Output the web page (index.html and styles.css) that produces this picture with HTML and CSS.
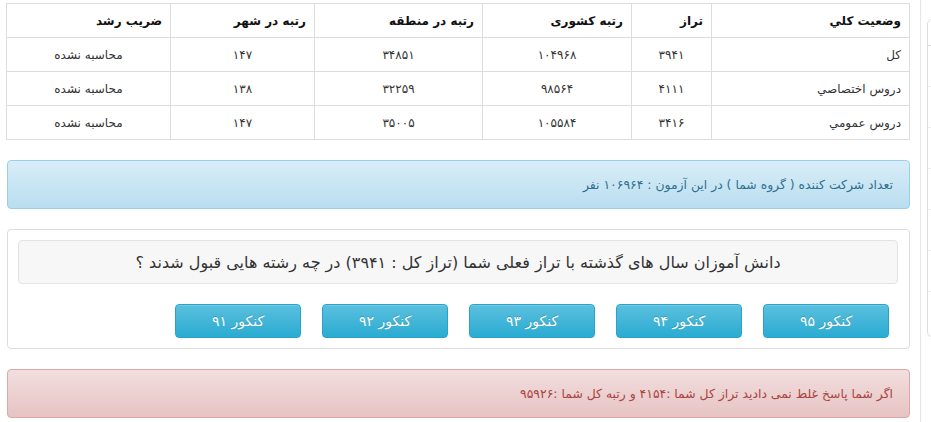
FILE: index.html
```html
<!DOCTYPE html>
<html lang="fa">
<head>
<meta charset="utf-8">
<link rel="stylesheet" href="styles.css">
</head>
<body>
<div class="page">
  <main class="main">
    <table class="results">
      <thead>
        <tr>
          <th class="c-name">وضعيت كلي</th>
          <th class="c-taraz">تراز</th>
          <th class="c-country">رتبه کشوری</th>
          <th class="c-region">رتبه در منطقه</th>
          <th class="c-city">رتبه در شهر</th>
          <th class="c-growth">ضریب رشد</th>
        </tr>
      </thead>
      <tbody>
        <tr>
          <td class="name">کل</td>
          <td>۳۹۴۱</td>
          <td>۱۰۴۹۶۸</td>
          <td>۳۴۸۵۱</td>
          <td>۱۴۷</td>
          <td>محاسبه نشده</td>
        </tr>
        <tr>
          <td class="name">دروس اختصاصي</td>
          <td>۴۱۱۱</td>
          <td>۹۸۵۶۴</td>
          <td>۳۲۲۵۹</td>
          <td>۱۳۸</td>
          <td>محاسبه نشده</td>
        </tr>
        <tr>
          <td class="name">دروس عمومي</td>
          <td>۳۴۱۶</td>
          <td>۱۰۵۵۸۴</td>
          <td>۳۵۰۰۵</td>
          <td>۱۴۷</td>
          <td>محاسبه نشده</td>
        </tr>
      </tbody>
    </table>

    <div class="alert alert-info">تعداد شرکت کننده ( گروه شما ) در این آزمون : ۱۰۶۹۶۴ نفر</div>

    <div class="panel">
      <div class="well">دانش آموزان سال های گذشته با تراز فعلی شما (تراز کل : ۳۹۴۱) در چه رشته هایی قبول شدند ؟</div>
      <div class="btn-row">
        <button class="btn">کنکور ۹۵</button>
        <button class="btn">کنکور ۹۴</button>
        <button class="btn">کنکور ۹۳</button>
        <button class="btn">کنکور ۹۲</button>
        <button class="btn">کنکور ۹۱</button>
      </div>
    </div>

    <div class="alert alert-danger">اگر شما پاسخ غلط نمی دادید تراز کل شما :۴۱۵۴ و رتبه کل شما :۹۵۹۲۶</div>
  </main>
  <aside class="side">
    <div class="side-box">
      <div class="side-head"></div>
      <div class="side-item"></div>
      <div class="side-item"></div>
      <div class="side-item"></div>
      <div class="side-item"></div>
      <div class="side-item"></div>
      <div class="side-item"></div>
    </div>
  </aside>
</div>
</body>
</html>
```

FILE: styles.css
```css
html, body {
  margin: 0;
  padding: 0;
  background: #fff;
  overflow: hidden;
}

body {
  font-family: "DejaVu Sans", "Noto Sans", sans-serif;
  font-size: 12px;
  color: #333;
}

.page {
  display: flex;
  width: 960px;
  height: 422px;
}

.main {
  width: 903px;
  margin-left: 7px;
  padding-top: 3px;
  direction: rtl;
  flex-shrink: 0;
}

.results {
  width: 903px;
  border-collapse: collapse;
  margin-bottom: 20px;
  table-layout: fixed;
}

.results th,
.results td {
  border: 1px solid #ddd;
  height: 34px;
  padding: 0 8px;
  box-sizing: border-box;
  line-height: 16px;
}

.results th {
  font-weight: bold;
  color: #111;
  text-align: right;
  font-size: 12px;
}

.results td {
  text-align: center;
  font-size: 12px;
}

.results td.name {
  text-align: right;
}

.c-name { width: 198px; }
.c-taraz { width: 80px; }
.c-country { width: 149px; }
.c-region { width: 168px; }
.c-city { width: 144px; }
.c-growth { width: 164px; }

.alert {
  border: 1px solid;
  border-radius: 4px;
  padding: 0 16px;
  display: flex;
  align-items: center;
  box-sizing: border-box;
  font-size: 12.4px;
}

.alert-info {
  height: 49px;
  color: #31708f;
  background: linear-gradient(to bottom, #d9edf7 0%, #b9def0 100%);
  border-color: #9acfea;
  margin-bottom: 20px;
}

.alert-danger {
  height: 49px;
  color: #a94442;
  background: linear-gradient(to bottom, #f2dede 0%, #e7c3c3 100%);
  border-color: #dca7a7;
}

.panel {
  border: 1px solid #ddd;
  border-radius: 4px;
  height: 120px;
  box-sizing: border-box;
  padding: 10px 11px 0 10px;
  margin-bottom: 20px;
}

.well {
  height: 44px;
  box-sizing: border-box;
  background: #f7f7f7;
  border: 1px solid #e3e3e3;
  border-radius: 4px;
  padding: 0 19px;
  display: flex;
  align-items: center;
  justify-content: center;
  font-size: 16px;
  color: #333;
}

.btn-row {
  display: flex;
  gap: 21px;
  margin-top: 20px;
  padding-right: 9px;
}

.btn {
  width: 126px;
  height: 34px;
  box-sizing: border-box;
  border: 1px solid #28a4c9;
  border-radius: 4px;
  background: linear-gradient(to bottom, #5bc0de 0%, #2aabd2 100%);
  color: #fff;
  font-family: "DejaVu Sans", "Noto Sans", sans-serif;
  font-size: 14px;
  padding: 0;
  box-shadow: inset 0 1px 0 rgba(255,255,255,.15);
  text-shadow: 0 -1px 0 rgba(0,0,0,.2);
}

.side {
  margin-left: 10px;
  width: 40px;
  border-left: 1px solid #e6e6e6;
  padding-left: 6px;
  flex-shrink: 0;
}

.side-box {
  margin-top: 19px;
  height: 318px;
  border: 1px solid #ddd;
  border-radius: 5px;
  box-sizing: border-box;
}

.side-head {
  height: 25px;
  border-bottom: 1px solid #ddd;
}

.side-item {
  height: 40px;
  border-bottom: 1px solid #eee;
}
```
